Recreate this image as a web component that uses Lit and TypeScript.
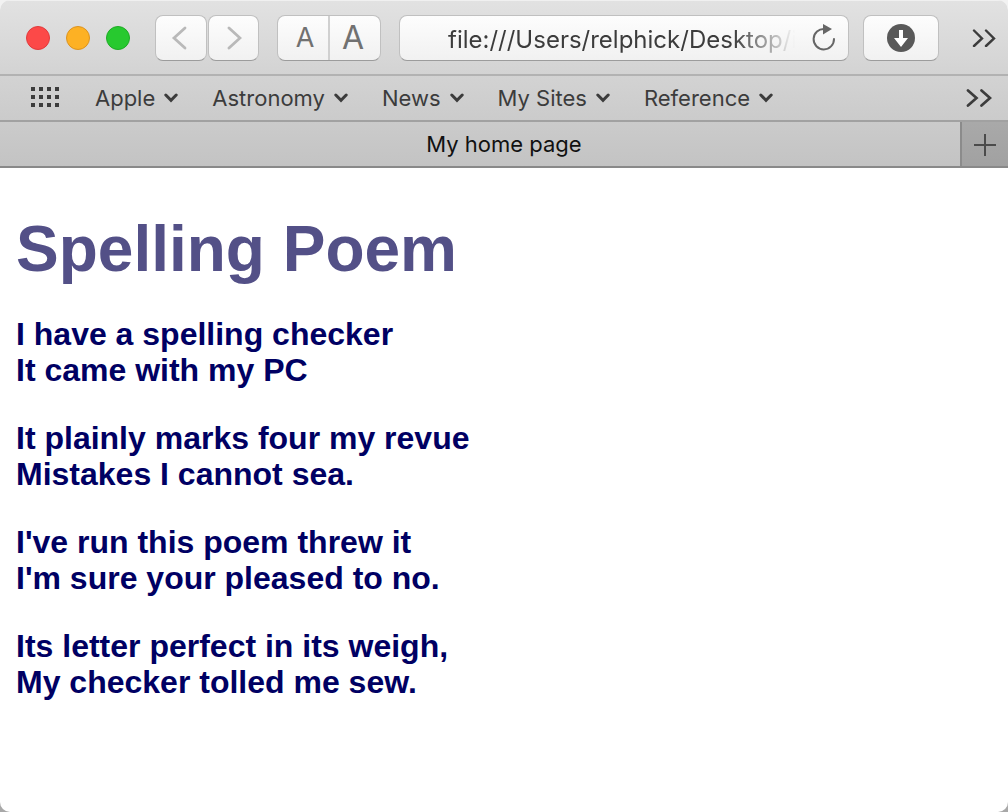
import { LitElement, html, css, svg } from "lit";
import { customElement, state } from "lit/decorators.js";

const chevronDown = html`<svg class="caret" width="14" height="10" viewBox="0 0 14 10" aria-hidden="true">
  <path d="M1.8 2 L7 7.3 L12.2 2" fill="none" stroke="currentColor" stroke-width="3" stroke-linecap="round" />
</svg>`;

const more = html`<svg width="26" height="18" viewBox="0 0 26 18" aria-hidden="true">
  <path d="M2 1.5 L10.5 9 L2 16.5 M15.5 1.5 L24 9 L15.5 16.5" fill="none" stroke="currentColor" stroke-width="2.7" stroke-linecap="round" />
</svg>`;

const moreSmall = html`<svg width="24" height="18" viewBox="0 0 24 18" aria-hidden="true">
  <path d="M2 1.5 L10 9.5 L2 17 M14 1.5 L22 9.5 L14 17" fill="none" stroke="currentColor" stroke-width="2.4" stroke-linecap="round" />
</svg>`;

@customElement("browser-toolbar")
export class BrowserToolbar extends LitElement {
  @state() private address = "file:///Users/relphick/Desktop/index.html";

  static styles = css`
    :host { display: block; }
    .bar {
      display: flex;
      align-items: center;
      box-sizing: border-box;
      height: 76px;
      padding: 2px 12px 0 26px;
      border-bottom: 2px solid #b2b2b2;
    }
    button {
      box-sizing: border-box;
      display: flex;
      align-items: center;
      justify-content: center;
      flex: none;
      margin: 0;
      padding: 0;
      border: 0;
      background: none;
      color: inherit;
      font-family: Inter, sans-serif;
    }
    .lights { display: flex; gap: 16px; }
    .light { width: 24px; height: 24px; border-radius: 50%; border: 1px solid; }
    .close { background: #fc4948; border-color: #e13a3c; }
    .minimise { background: #fdb124; border-color: #dc9320; }
    .zoom { background: #27c92f; border-color: #1eab25; }
    .face {
      height: 46px;
      box-sizing: border-box;
      border: 1px solid #c0c0c0;
      border-bottom-color: #9c9c9c;
      border-radius: 8px;
      background: linear-gradient(#fdfdfd, #f1f1f1);
    }
    .history { display: flex; gap: 1px; margin-left: 25px; color: #b9b9b9; }
    .history .face { width: 52px; }
    .history .forward { width: 51px; }
    .zoomer { display: flex; width: 104px; margin-left: 18px; color: #717171; }
    .zoomer button { flex: 1; line-height: 32px; }
    .zoomer .smaller { font-size: 27px; padding-left: 4px; border-right: 2px solid #d0d0d0; }
    .zoomer .larger { font-size: 32px; padding-right: 4px; }
    .address {
      flex: 1;
      min-width: 0;
      display: flex;
      align-items: center;
      margin-left: 18px;
      padding: 0 11px 0 48px;
    }
    .address input {
      flex: 1;
      min-width: 0;
      width: 0;
      height: 32px;
      margin: 2px 0 0;
      padding: 0;
      border: 0;
      outline: 0;
      background: none;
      color: #3c3c3c;
      font: 24px Inter, sans-serif;
      -webkit-mask-image: linear-gradient(to left, transparent 14px, #000 76px);
      mask-image: linear-gradient(to left, transparent 14px, #000 76px);
    }
    .reload { color: #666; }
    .download { width: 76px; margin-left: 14px; color: #595959; }
    .overflow { margin-left: 33px; color: #3c3c3c; }
  `;

  render() {
    return html`<div class="bar">
      <div class="lights">
        <button class="light close" aria-label="Close"></button>
        <button class="light minimise" aria-label="Minimise"></button>
        <button class="light zoom" aria-label="Zoom"></button>
      </div>
      <div class="history">
        <button class="face back" aria-label="Back">
          <svg width="20" height="24" viewBox="0 0 20 24"><path d="M14 2 L3 12 L14 22" fill="none" stroke="currentColor" stroke-width="2.8" stroke-linecap="round" /></svg>
        </button>
        <button class="face forward" aria-label="Forward">
          <svg width="16" height="24" viewBox="0 0 16 24"><path d="M3 2 L14 12 L3 22" fill="none" stroke="currentColor" stroke-width="2.8" stroke-linecap="round" /></svg>
        </button>
      </div>
      <div class="face zoomer">
        <button class="smaller" title="Smaller text">A</button>
        <button class="larger" title="Larger text">A</button>
      </div>
      <div class="face address">
        <input type="text" aria-label="Address" spellcheck="false" .value=${this.address}
          @input=${(e: Event) => (this.address = (e.target as HTMLInputElement).value)} />
        <button class="reload" aria-label="Reload">
          <svg width="28" height="28" viewBox="0 0 28 28">
            <path d="M15.5 5 A10.2 10.2 0 1 0 25 15" fill="none" stroke="currentColor" stroke-width="2" stroke-linecap="round" />
            <path d="M14 0 L23 5 L14 10.5 Z" fill="currentColor" />
          </svg>
        </button>
      </div>
      <button class="face download" aria-label="Downloads">
        <svg width="28" height="28" viewBox="0 0 28 28">
          <circle cx="14" cy="14" r="14" fill="currentColor" />
          <path d="M12 6 H16 V14 H21 L14 23 L7 14 H12 Z" fill="#fff" />
        </svg>
      </button>
      <button class="overflow" aria-label="More tools">${moreSmall}</button>
    </div>`;
  }
}

@customElement("bookmarks-bar")
export class BookmarksBar extends LitElement {
  private folders = ["Apple", "Astronomy", "News", "My Sites", "Reference"];

  static styles = css`
    :host { display: block; }
    .bar {
      display: flex;
      align-items: center;
      box-sizing: border-box;
      height: 46px;
      padding: 0 16px 0 31px;
      border-bottom: 2px solid #a1a1a1;
      color: #3c3c3c;
    }
    button {
      display: flex;
      align-items: center;
      gap: 9px;
      flex: none;
      margin: 0;
      padding: 0;
      border: 0;
      background: none;
      color: inherit;
      font: 22px/28px Inter, sans-serif;
      white-space: nowrap;
    }
    .folders { display: flex; gap: 34px; margin-left: 36px; }
    .overflow { margin-left: auto; }
  `;

  render() {
    return html`<nav class="bar" aria-label="Bookmarks">
      <button aria-label="Top sites">
        <svg width="28" height="22" viewBox="0 0 28 22">
          ${[0, 8, 16].map((y) => [0, 8, 16, 24].map((x) => svg`<rect x=${x} y=${y} width="4" height="4" fill="#3c3c3c" />`))}
        </svg>
      </button>
      <div class="folders">
        ${this.folders.map((name) => html`<button aria-haspopup="menu">${name}${chevronDown}</button>`)}
      </div>
      <button class="overflow" aria-label="More bookmarks">${more}</button>
    </nav>`;
  }
}

@customElement("tab-strip")
export class TabStrip extends LitElement {
  static styles = css`
    :host { display: block; }
    .strip {
      display: flex;
      box-sizing: border-box;
      height: 46px;
      border-bottom: 2px solid #898989;
    }
    button {
      margin: 0;
      padding: 0;
      border: 0;
      background: none;
    }
    .tab {
      flex: 1;
      padding-left: 48px;
      color: #111;
      font: 22px/44px Inter, sans-serif;
    }
    .add {
      display: flex;
      align-items: center;
      justify-content: center;
      box-sizing: border-box;
      width: 48px;
      padding-top: 2px;
      border-left: 2px solid #8b8b8b;
      background: linear-gradient(#a9a9a9, #a1a1a1);
    }
  `;

  render() {
    return html`<div class="strip">
      <button class="tab" aria-current="page">My home page</button>
      <button class="add" aria-label="New tab">
        <svg width="22" height="22" viewBox="0 0 22 22"><path d="M11 0 V22 M0 11 H22" stroke="#4b4b4b" stroke-width="2" /></svg>
      </button>
    </div>`;
  }
}

@customElement("app-root")
export class AppRoot extends LitElement {
  private stanzas = [
    ["I have a spelling checker", "It came with my PC"],
    ["It plainly marks four my revue", "Mistakes I cannot sea."],
    ["I've run this poem threw it", "I'm sure your pleased to no."],
    ["Its letter perfect in its weigh,", "My checker tolled me sew."],
  ];

  static styles = css`
    :host { display: block; background: linear-gradient(#f2f2f2 50%, #a8a8a8 50%); }
    .window {
      display: flex;
      flex-direction: column;
      min-height: 100vh;
      overflow: hidden;
      border-radius: 10px;
      background: #fff;
    }
    .chrome {
      background: linear-gradient(#e2e2e2, #d3d3d3 74px, #c3c3c3);
      box-shadow: inset 0 1px #f0f0f0;
    }
    .page {
      flex: 1;
      padding: 45px 16px 32px;
      font-family: "Liberation Sans", Arial, sans-serif;
      font-weight: bold;
    }
    h1 {
      margin: 0;
      color: #535087;
      font-size: 64px;
      line-height: 72px;
    }
    p {
      margin: 32px 0 0;
      color: #000063;
      font-size: 32px;
      line-height: 36px;
    }
    h1 + p { margin-top: 31px; }
  `;

  render() {
    return html`<div class="window">
      <header class="chrome">
        <browser-toolbar></browser-toolbar>
        <bookmarks-bar></bookmarks-bar>
        <tab-strip></tab-strip>
      </header>
      <main class="page">
        <h1>Spelling Poem</h1>
        ${this.stanzas.map(([first, second]) => html`<p>${first}<br />${second}</p>`)}
      </main>
    </div>`;
  }
}
